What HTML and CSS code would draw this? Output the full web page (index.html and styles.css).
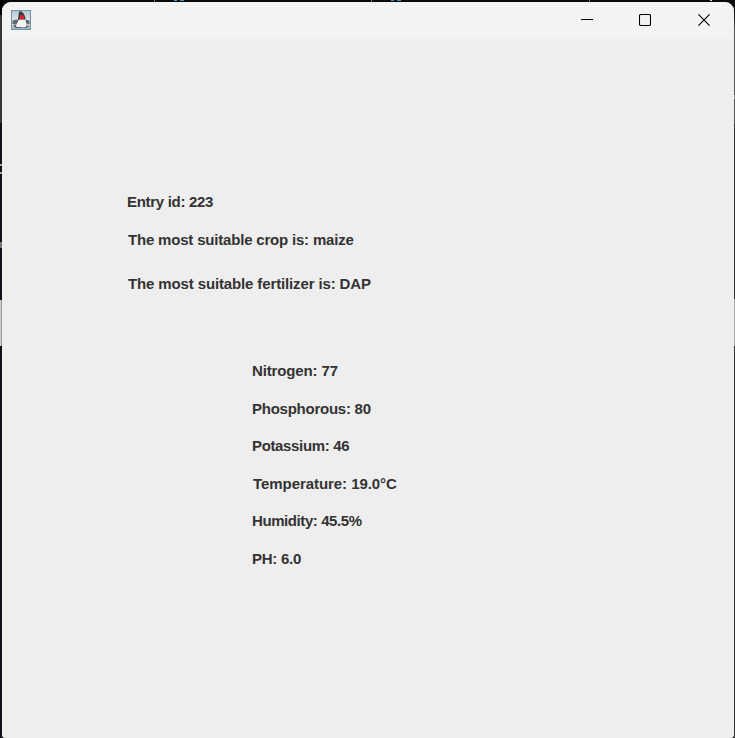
FILE: index.html
```
<!DOCTYPE html>
<html lang="en">
<head>
<meta charset="utf-8">
<title>Crop results</title>
<link rel="stylesheet" href="styles.css">
</head>
<body>
<main class="window">
  <header class="titlebar">
    <svg class="app-icon" width="20" height="20" viewBox="0 0 20 20">
      <defs><linearGradient id="sky" x2="0" y2="1"><stop stop-color="#b4c6d2"/><stop offset=".5" stop-color="#dde4e9"/><stop offset="1" stop-color="#a3b2be"/></linearGradient></defs>
      <rect x=".5" y=".5" width="19" height="19" fill="url(#sky)" stroke="#7393ab"/>
      <path d="M1.500 10.500l4-1 2 1.500-2 3.500-4-.5zM14 9.500l4.500 1v3.500l-4-.5z" fill="#5f686f"/>
      <path d="M2 16l3-1.500h10l3 2-3 1.500H5z" fill="#59626a"/>
      <path d="M7.500 8h6l1.500 4 .5 4.500-2.500 1-3.500-.5-4 0-.5-1.500 2-4z" fill="#f5f5f5"/>
      <path d="M8 1.500h2.500l2.500 2.500 1.500 4-.5 1.500H8L6.500 12 7.500 6z" fill="#34393d"/>
      <circle cx="10.800" cy="7.200" r="2.300" fill="#e0242a"/>
    </svg>
    <div class="controls">
      <svg width="12" height="12" viewBox="0 0 12 12"><path d="M0 5.500h12"/></svg>
      <svg width="12" height="12" viewBox="0 0 12 12"><rect x=".5" y=".5" width="11" height="11" rx="1.300"/></svg>
      <svg width="12" height="12" viewBox="0 0 12 12"><path d="M.4 .4l11.200 11.200M11.600 .4L.4 11.600"/></svg>
    </div>
  </header>
  <section class="recommendation">
    <p class="entry">Entry id: 223</p>
    <p class="crop">The most suitable crop is: maize</p>
    <p class="fertilizer">The most suitable fertilizer is: DAP</p>
  </section>
  <section class="readings">
    <p class="nitrogen">Nitrogen: 77</p>
    <p class="phosphorous">Phosphorous: 80</p>
    <p class="potassium">Potassium: 46</p>
    <p class="temperature">Temperature: 19.0°C</p>
    <p class="humidity">Humidity: 45.5%</p>
    <p class="ph">PH: 6.0</p>
  </section>
</main>
</body>
</html>
```
FILE: styles.css
```
* { box-sizing: border-box; }
html { height: 100%; }
body {
  margin: 0;
  height: 738px;
  padding: 2px 1px 0 2px;
  overflow: hidden;
  background:
    linear-gradient(#3d9bcb, #3d9bcb) 174px 0 / 3px 1px no-repeat,
    linear-gradient(#3d9bcb, #3d9bcb) 180px 0 / 4px 1px no-repeat,
    linear-gradient(#3d9bcb, #3d9bcb) 391px 0 / 3px 1px no-repeat,
    linear-gradient(#3d9bcb, #3d9bcb) 397px 0 / 4px 1px no-repeat,
    linear-gradient(#777, #777) 154px 0 / 1px 2px no-repeat,
    linear-gradient(#777, #777) 371px 0 / 1px 2px no-repeat,
    linear-gradient(#777, #777) 589px 0 / 1px 2px no-repeat,
    linear-gradient(#ddd, #ddd) 710px 0 / 2px 1px no-repeat,
    linear-gradient(#aaa, #aaa) 0 164px / 2px 2px no-repeat,
    linear-gradient(#aaa, #aaa) 0 172px / 2px 2px no-repeat,
    linear-gradient(#777, #777) 0 242px / 2px 6px no-repeat,
    linear-gradient(90deg, #ccc 1px, #999 1px) 0 300px / 2px 46px no-repeat,
    linear-gradient(#999, #999) 734px 95px / 1px 4px no-repeat,
    linear-gradient(#aaa, #aaa) 734px 299px / 1px 47px no-repeat,
    linear-gradient(#000 15px, #34383b 15px, #34383b 123px, #11111a 123px) 0 0 / 2px 100% no-repeat,
    linear-gradient(#111 15px, #555 30px, #555 123px, #333 124px) 734px 0 / 1px 100% no-repeat,
    #0b0909;
  color: #333;
  font: bold 15px/18px "Liberation Sans", Arial, sans-serif;
}
.window {
  height: 736px;
  overflow: hidden;
  background: #eee;
  border-radius: 9px 9px 3px 3px;
}
.titlebar {
  display: flex;
  justify-content: space-between;
  height: 37px;
  padding: 8px 24px 0 9px;
  background: #f3f3f3;
}
.controls { display: flex; padding-top: 4px; }
.controls svg { fill: none; stroke: #000; stroke-width: 1.100; }
.controls svg + svg { margin-left: 46px; }
.controls svg:last-child { margin-left: 47px; }
p { margin: 0; white-space: nowrap; }
.recommendation { padding: 154px 0 0 125px; }
.entry { letter-spacing: -.3px; }
.crop { margin: 20px 0 26px 1px; letter-spacing: -.19px; }
.fertilizer { margin-left: 1px; letter-spacing: -.13px; }
.readings { display: grid; row-gap: 19.600px; padding: 69px 0 0 250px; }
.nitrogen { letter-spacing: -.14px; }
.phosphorous { letter-spacing: -.25px; }
.potassium { letter-spacing: -.35px; }
.temperature { margin-left: 1px; letter-spacing: -.06px; }
.humidity { letter-spacing: -.42px; }
.ph { letter-spacing: -.25px; }
```
